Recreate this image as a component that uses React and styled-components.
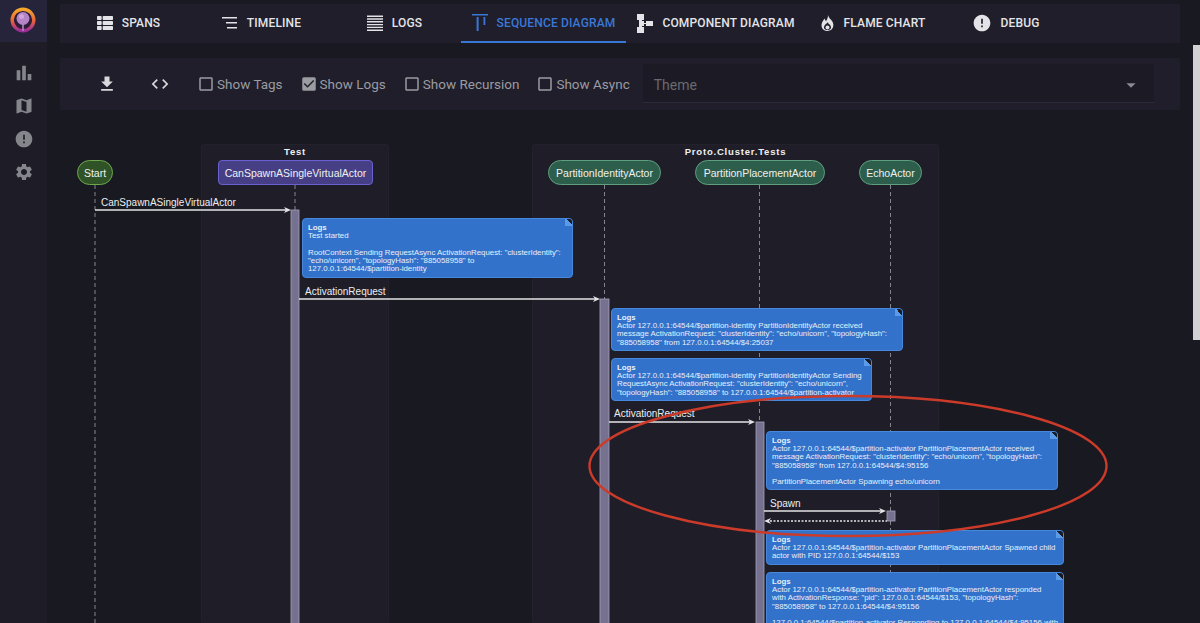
import React from "react";
import styled, { createGlobalStyle } from "styled-components";
import { FaThList } from "react-icons/fa";
import {
  MdBarChart,
  MdMap,
  MdError,
  MdSettings,
  MdFileDownload,
  MdCode,
  MdCheckBox,
  MdCheckBoxOutlineBlank,
  MdArrowDropDown,
} from "react-icons/md";

const Global = createGlobalStyle`
  html, body { margin: 0; padding: 0; height: 100%; background: #191921; }
  #root { height: 100%; }
  * { box-sizing: border-box; }
`;

const Shell = styled.div`
  display: flex;
  height: 623px;
  overflow: hidden;
  position: relative;
  background: #191921;
  font-family: Roboto, "Liberation Sans", sans-serif;
`;

const Sidebar = styled.aside`
  width: 47px;
  flex: none;
  background: #1e1d27;
  display: flex;
  flex-direction: column;
  align-items: center;
  color: #85858c;
`;

const LogoBox = styled.div`
  width: 47px;
  height: 42px;
  padding-right: 2px;
  background: #26243a;
  display: flex;
  align-items: center;
  justify-content: center;
  margin-bottom: 14px;
`;

const SideItem = styled.div`
  height: 33px;
  display: flex;
  align-items: center;
  justify-content: center;
  font-size: ${(p) => p.$size || 20}px;
`;

const Main = styled.main`
  flex: 1;
  min-width: 0;
  display: flex;
  flex-direction: column;
`;

const TabBar = styled.nav`
  margin: 4px 20px 0 13px;
  height: 39px;
  padding-left: 2px;
  background: #1f1e2a;
  display: flex;
  flex: none;
`;

const Tab = styled.div`
  width: ${(p) => p.$w || 133}px;
  height: 39px;
  padding-top: 1px;
  display: flex;
  align-items: center;
  justify-content: center;
  gap: 9px;
  font-size: 12px;
  font-weight: 500;
  letter-spacing: 0.15px;
  white-space: nowrap;
  color: ${(p) => (p.$active ? "#3a78d8" : "#e4e4e8")};
  border-bottom: 2px solid ${(p) => (p.$active ? "#3a78d8" : "transparent")};
`;

const TabIcon = styled.span`
  display: flex;
  flex: none;
  justify-content: center;
  font-size: ${(p) => p.$size || 16}px;
  svg {
    flex: none;
  }
`;

const Toolbar = styled.div`
  margin: 15px 20px 0 13px;
  height: 52px;
  padding: 6px 26px 7px 37px;
  background: #1f1e2a;
  display: flex;
  align-items: center;
  flex: none;
  color: #9b9ba2;
`;

const ToolIcon = styled.div`
  width: 20px;
  margin-left: ${(p) => p.$gap || 0}px;
  display: flex;
  justify-content: center;
  font-size: 20px;
  color: #d8d8dc;
`;

const CheckGroup = styled.div`
  display: flex;
  margin: 0 13px 0 27px;
  gap: 17px;
`;

const Check = styled.label`
  display: flex;
  align-items: center;
  gap: 2px;
  font-size: 13.5px;
  white-space: nowrap;
  svg {
    font-size: 18px;
  }
`;

const Select = styled.div`
  flex: 1;
  height: 39px;
  padding: 3px 12px 0 11px;
  background: #1c1b25;
  border-bottom: 1px solid #2b2a37;
  color: #696970;
  font-size: 14px;
  display: flex;
  align-items: center;
  justify-content: space-between;
  svg {
    font-size: 22px;
    color: #8a8a90;
  }
`;

const Canvas = styled.section`
  position: relative;
  flex: 1;
`;

// canvas origin is 47,110 on the page, the diagram data uses page coordinates
const X = (v) => v - 47;
const Y = (v) => v - 110;

const Group = styled.div`
  position: absolute;
  left: ${(p) => X(p.$x)}px;
  top: ${Y(144)}px;
  width: ${(p) => p.$w}px;
  height: 480px;
  background: #1f1e28;
  border: 1px solid #23222c;
  border-radius: 3px;
  text-align: center;
  padding-top: 1px;
  color: #f0f0f2;
  font: bold 9.5px "Liberation Sans", sans-serif;
  letter-spacing: 0.8px;
`;

const Actor = styled.div`
  position: absolute;
  left: ${(p) => X(p.$x)}px;
  top: ${Y(160)}px;
  width: ${(p) => p.$w}px;
  height: 25px;
  display: flex;
  align-items: center;
  justify-content: center;
  color: #eef0f0;
  font: 10.5px "Liberation Sans", sans-serif;
  border-radius: ${(p) => p.$radius}px;
  background: ${(p) => p.$fill};
  border: 1px solid ${(p) => p.$stroke};
`;

const Lines = styled.svg`
  position: absolute;
  left: -47px;
  top: -110px;
  width: 1200px;
  height: 623px;
  pointer-events: none;
`;

const Label = styled.text`
  fill: #eceef0;
  font: 10px "Liberation Sans", sans-serif;
`;

const Note = styled.div`
  position: absolute;
  left: ${(p) => X(p.$x)}px;
  top: ${(p) => Y(p.$y)}px;
  width: ${(p) => p.$w}px;
  height: ${(p) => p.$h}px;
  padding: 5px 5px 0;
  background: #3272cb;
  border: 1px solid #4689dc;
  border-radius: 4px;
  color: #e8f0fa;
  font: 7.85px/8.2px "Liberation Sans", sans-serif;
  white-space: pre;
  overflow: hidden;
  &::after {
    content: "";
    position: absolute;
    top: -1px;
    right: -1px;
    width: 8px;
    height: 8px;
    background: linear-gradient(45deg, #5b9ae6 50%, #191921 50%);
  }
`;

const NoteTitle = styled.div`
  font-weight: bold;
`;

const Thumb = styled.div`
  position: absolute;
  top: 45px;
  right: 0;
  width: 7px;
  height: 295px;
  background: #d2d2d4;
`;

const tabs = [
  { label: "SPANS", icon: <FaThList /> },
  {
    label: "TIMELINE",
    icon: (
      <svg width="16" height="14" viewBox="0 0 16 14" fill="currentColor">
        <path d="M0 1h15v1.6H0zM4 6h11v1.6H4zM5 11h10v1.6H5z" />
      </svg>
    ),
  },
  {
    label: "LOGS",
    icon: (
      <svg width="16" height="16" viewBox="0 0 16 16" fill="currentColor">
        <path d="M0 .5h16v1.4H0zM0 3.3h16v1.4H0zM0 6.1h16v1.4H0zM0 8.9h16v1.4H0zM0 11.7h16v1.4H0zM0 14.5h16v1.4H0z" />
      </svg>
    ),
  },
  {
    label: "SEQUENCE DIAGRAM",
    active: true,
    w: 165,
    icon: (
      <svg width="16" height="18" viewBox="0 0 16 18" fill="currentColor">
        <path d="M0 0h16v1.6H0zM4.6 3h2v14h-2zM11.5 3h1.8v8h-1.8z" />
      </svg>
    ),
  },
  {
    label: "COMPONENT DIAGRAM",
    w: 180,
    icon: (
      <svg width="16" height="19" viewBox="0 0 16 19" fill="currentColor">
        <path d="M0 0h7v6H5v1h2v2h2V7h7v5H9v-2H7v2H5v1h2v6H0v-6h2V6H0z" />
      </svg>
    ),
  },
  {
    label: "FLAME CHART",
    icon: (
      <svg width="15" height="16" viewBox="0 0 16 17" fill="currentColor" fillRule="evenodd">
        <path d="M8.5 0c.6 3 3 4.3 4.7 7 2.3 3.7 1 10-5.2 10C1.800 17 .4 11 2.600 7.200 3.300 6 4.200 5 5 3.800c.3 1.300.7 2.100 1.400 2.700C7.600 4.800 8.700 2.500 8.500 0zM8 7.800c-1 1.600-3.800 3.200-3.800 5.400 0 1.500 1.500 2.800 3.800 2.800s3.800-1.300 3.800-2.800c0-2.200-2.800-3.800-3.800-5.400z" />
        <circle cx="8" cy="13.2" r="2.1" />
      </svg>
    ),
  },
  { label: "DEBUG", size: 20, icon: <MdError /> },
];

const checks = [
  { label: "Show Tags" },
  { label: "Show Logs", on: true },
  { label: "Show Recursion" },
  { label: "Show Async" },
];

const actors = [
  { name: "Start", x: 77, w: 36, radius: 13, fill: "#2f5326", stroke: "#6ea64d" },
  { name: "CanSpawnASingleVirtualActor", x: 218, w: 155, radius: 4, fill: "#463f85", stroke: "#6a60cf" },
  { name: "PartitionIdentityActor", x: 548, w: 113, radius: 13, fill: "#2d5e4b", stroke: "#5f9f80" },
  { name: "PartitionPlacementActor", x: 695, w: 130, radius: 13, fill: "#2d5e4b", stroke: "#5f9f80" },
  { name: "EchoActor", x: 859, w: 63, radius: 13, fill: "#2d5e4b", stroke: "#5f9f80" },
];

const notes = [
  {
    x: 302, y: 218, w: 271, h: 60,
    text: `Test started

RootContext Sending RequestAsync ActivationRequest: "clusterIdentity":
"echo/unicorn", "topologyHash": "885058958" to
127.0.0.1:64544/$partition-identity`,
  },
  {
    x: 611, y: 308, w: 292, h: 43,
    text: `Actor 127.0.0.1:64544/$partition-identity PartitionIdentityActor received
message ActivationRequest: "clusterIdentity": "echo/unicorn", "topologyHash":
"885058958" from 127.0.0.1:64544/$4:25037`,
  },
  {
    x: 611, y: 358, w: 261, h: 43,
    text: `Actor 127.0.0.1:64544/$partition-identity PartitionIdentityActor Sending
RequestAsync ActivationRequest: "clusterIdentity": "echo/unicorn",
"topologyHash": "885058958" to 127.0.0.1:64544/$partition-activator`,
  },
  {
    x: 766, y: 431, w: 292, h: 59,
    text: `Actor 127.0.0.1:64544/$partition-activator PartitionPlacementActor received
message ActivationRequest: "clusterIdentity": "echo/unicorn", "topologyHash":
"885058958" from 127.0.0.1:64544/$4:95156

PartitionPlacementActor Spawning echo/unicorn`,
  },
  {
    x: 766, y: 530, w: 298, h: 35,
    text: `Actor 127.0.0.1:64544/$partition-activator PartitionPlacementActor Spawned child
actor with PID 127.0.0.1:64544/$153`,
  },
  {
    x: 766, y: 572, w: 298, h: 70,
    text: `Actor 127.0.0.1:64544/$partition-activator PartitionPlacementActor responded
with ActivationResponse: "pid": 127.0.0.1:64544/$153, "topologyHash":
"885058958" to 127.0.0.1:64544/$4:95156

127.0.0.1:64544/$partition-activator Responding to 127.0.0.1:64544/$4:95156 with`,
  },
];

const lifelines = [95, 295, 604.5, 759.5, 890.5];

const messages = [
  { label: "CanSpawnASingleVirtualActor", lx: 101, ly: 206, y: 210, x1: 95, x2: 291 },
  { label: "ActivationRequest", lx: 305, ly: 295, y: 299, x1: 299, x2: 600 },
  { label: "ActivationRequest", lx: 614, ly: 417, y: 422, x1: 609, x2: 755 },
  { label: "Spawn", lx: 770, ly: 507, y: 511, x1: 764, x2: 886 },
];

const bars = [
  { x: 291, y: 210, w: 8, h: 420 },
  { x: 600, y: 299, w: 9, h: 330 },
  { x: 756, y: 422, w: 8, h: 210 },
  { x: 887, y: 511, w: 8, h: 10 },
];

const Logo = () => (
  <svg width="26" height="28" viewBox="0 0 26 28">
    <defs>
      <linearGradient id="ring" x1="0" y1="0" x2="0" y2="1">
        <stop offset="0" stopColor="#f5a82c" />
        <stop offset="0.55" stopColor="#e8603c" />
        <stop offset="1" stopColor="#9a2d9a" />
      </linearGradient>
    </defs>
    <circle cx="13" cy="13" r="10.8" fill="#2c1c38" stroke="url(#ring)" strokeWidth="3.4" />
    <circle cx="13" cy="11.5" r="6.5" fill="#b484c6" />
    <circle cx="11.5" cy="9.5" r="2.5" fill="#cfa6da" />
    <path d="M12.2 17h1.6v7h-1.6z" fill="#b484c6" />
  </svg>
);

const App = () => (
  <Shell>
    <Global />
    <Sidebar>
      <LogoBox>
        <Logo />
      </LogoBox>
      <SideItem $size={22}>
        <MdBarChart />
      </SideItem>
      <SideItem>
        <MdMap />
      </SideItem>
      <SideItem>
        <MdError />
      </SideItem>
      <SideItem>
        <MdSettings />
      </SideItem>
    </Sidebar>
    <Main>
      <TabBar>
        {tabs.map((t) => (
          <Tab key={t.label} $active={t.active} $w={t.w}>
            <TabIcon $size={t.size}>{t.icon}</TabIcon>
            {t.label}
          </Tab>
        ))}
      </TabBar>
      <Toolbar>
        <ToolIcon>
          <MdFileDownload />
        </ToolIcon>
        <ToolIcon $gap={33}>
          <MdCode />
        </ToolIcon>
        <CheckGroup>
          {checks.map((c) => (
            <Check key={c.label}>
              {c.on ? <MdCheckBox /> : <MdCheckBoxOutlineBlank />}
              {c.label}
            </Check>
          ))}
        </CheckGroup>
        <Select>
          Theme
          <MdArrowDropDown />
        </Select>
      </Toolbar>
      <Canvas>
        <Group $x={201} $w={188}>
          Test
        </Group>
        <Group $x={532} $w={407}>
          Proto.Cluster.Tests
        </Group>
        <Lines viewBox="0 0 1200 623">
          {lifelines.map((x) => (
            <line key={x} x1={x} x2={x} y1="185" y2="623" stroke="#85858c" strokeWidth="1" strokeDasharray="4 3" />
          ))}
          {bars.map((b) => (
            <rect key={b.x} x={b.x} y={b.y} width={b.w} height={b.h} fill="#75718f" stroke="#a5a1b8" strokeWidth="0.8" />
          ))}
          {messages.map((m) => (
            <g key={m.ly}>
              <Label x={m.lx} y={m.ly}>
                {m.label}
              </Label>
              <line x1={m.x1} x2={m.x2 - 3} y1={m.y} y2={m.y} stroke="#e4e4e6" strokeWidth="1.4" />
              <path d={`M${m.x2 - 7} ${m.y - 3}L${m.x2} ${m.y}L${m.x2 - 7} ${m.y + 3}L${m.x2 - 5} ${m.y}z`} fill="#e4e4e6" />
            </g>
          ))}
          <line x1="770" x2="887" y1="521" y2="521" stroke="#e4e4e6" strokeWidth="1.4" strokeDasharray="2 1.5" />
          <path d="M771 518L764 521L771 524L769 521z" fill="#e4e4e6" />
        </Lines>
        {actors.map((a) => (
          <Actor key={a.name} $x={a.x} $w={a.w} $radius={a.radius} $fill={a.fill} $stroke={a.stroke}>
            {a.name}
          </Actor>
        ))}
        {notes.map((n) => (
          <Note key={n.y} $x={n.x} $y={n.y} $w={n.w} $h={n.h}>
            <NoteTitle>Logs</NoteTitle>
            {n.text}
          </Note>
        ))}
        <Lines viewBox="0 0 1200 623">
          <ellipse cx="848" cy="466" rx="258.5" ry="70" fill="none" stroke="#cc3b2a" strokeWidth="2.4" />
        </Lines>
      </Canvas>
    </Main>
    <Thumb />
  </Shell>
);

export default App;
